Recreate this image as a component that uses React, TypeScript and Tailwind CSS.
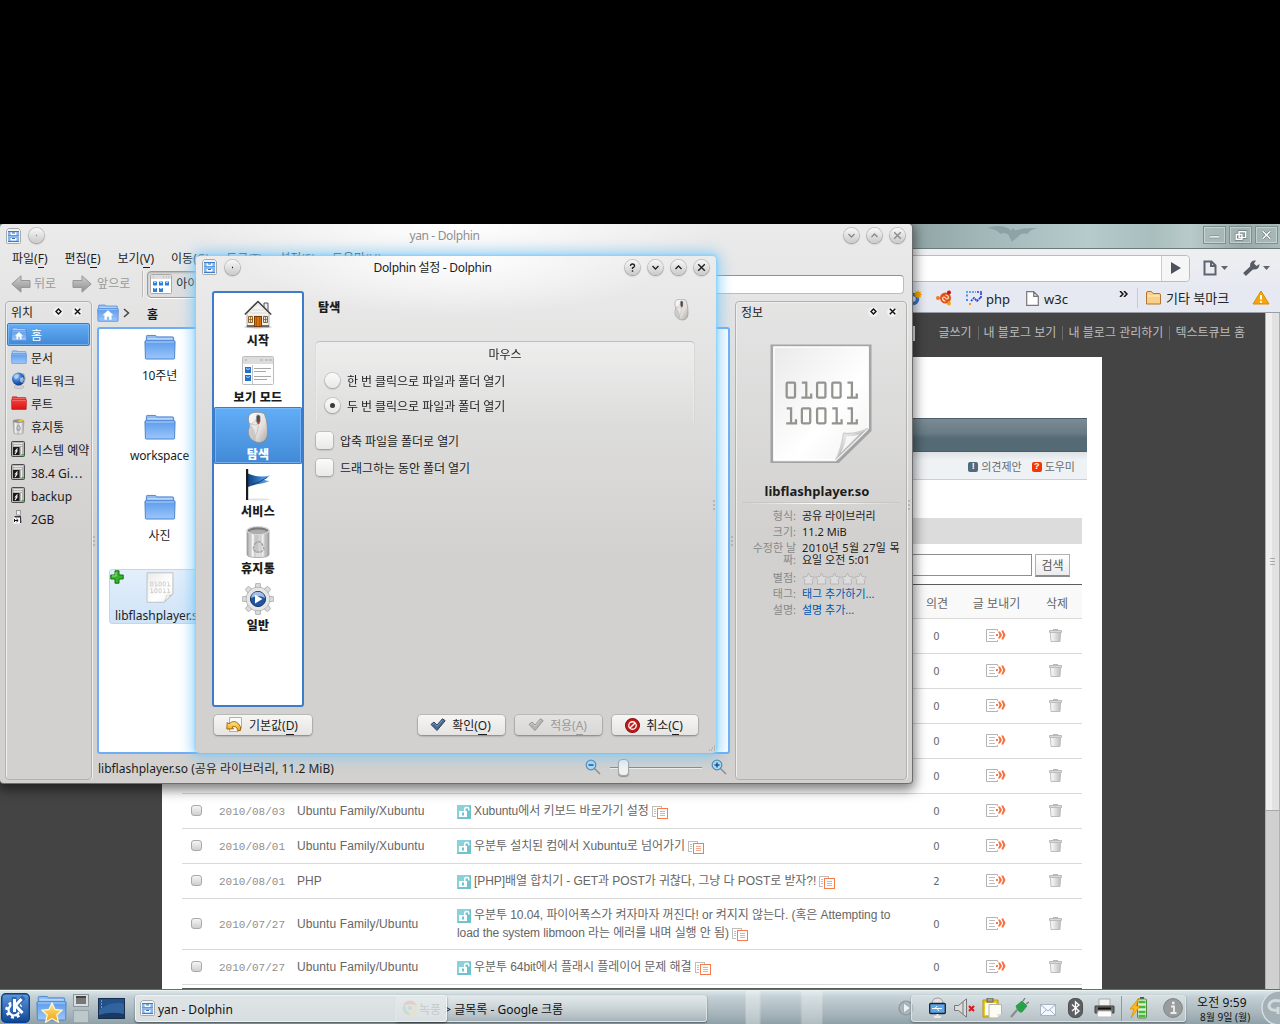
import React from "react";

type Kids = { children?: React.ReactNode };

/* ---------- small drawings ---------- */

function Gradients() {
  return (
    <svg className="absolute h-0 w-0" aria-hidden="true">
      <defs>
        <linearGradient id="folderBlue" x1="0" y1="0" x2="0" y2="1">
          <stop offset="0" stopColor="#5b9bea" />
          <stop offset="1" stopColor="#9cc6fa" />
        </linearGradient>
        <linearGradient id="folderRed" x1="0" y1="0" x2="0" y2="1">
          <stop offset="0" stopColor="#f5403c" />
          <stop offset="1" stopColor="#d81414" />
        </linearGradient>
        <linearGradient id="metal" x1="0" y1="0" x2="1" y2="0">
          <stop offset="0" stopColor="#9d9d9d" />
          <stop offset="0.25" stopColor="#f6f6f6" />
          <stop offset="0.45" stopColor="#c0c0c0" />
          <stop offset="0.7" stopColor="#efefef" />
          <stop offset="1" stopColor="#9a9a9a" />
        </linearGradient>
        <linearGradient id="mouseBody" x1="0" y1="0" x2="1" y2="1">
          <stop offset="0" stopColor="#ffffff" />
          <stop offset="0.6" stopColor="#e2dfdc" />
          <stop offset="1" stopColor="#a9a6a3" />
        </linearGradient>
        <linearGradient id="paper" x1="0" y1="0" x2="1" y2="1">
          <stop offset="0" stopColor="#e9eae9" />
          <stop offset="0.6" stopColor="#ffffff" />
          <stop offset="1" stopColor="#f1f1f1" />
        </linearGradient>
        <linearGradient id="curl" x1="0" y1="0" x2="1" y2="1">
          <stop offset="0" stopColor="#ffffff" />
          <stop offset="0.35" stopColor="#dcdcdc" />
          <stop offset="0.65" stopColor="#8e8e8e" />
        </linearGradient>
        <linearGradient id="arrowGray" x1="0" y1="0" x2="0" y2="1">
          <stop offset="0" stopColor="#d0d0d0" />
          <stop offset="1" stopColor="#8e8e8e" />
        </linearGradient>
        <linearGradient id="flagBlue" x1="0" y1="0" x2="1" y2="0">
          <stop offset="0" stopColor="#123f7c" />
          <stop offset="0.5" stopColor="#2f78c4" />
          <stop offset="1" stopColor="#79b4ea" />
        </linearGradient>
        <radialGradient id="globe" cx="0.35" cy="0.3" r="0.8">
          <stop offset="0" stopColor="#a9ccf5" />
          <stop offset="0.5" stopColor="#2e6cc4" />
          <stop offset="1" stopColor="#0d2e75" />
        </radialGradient>
        <linearGradient id="kblue" x1="0" y1="0" x2="0" y2="1">
          <stop offset="0" stopColor="#5f97d8" />
          <stop offset="1" stopColor="#0f4797" />
        </linearGradient>
        <linearGradient id="gold" x1="0" y1="0" x2="0" y2="1">
          <stop offset="0" stopColor="#ffe88a" />
          <stop offset="1" stopColor="#f0a10c" />
        </linearGradient>
        <linearGradient id="binGray" x1="0" y1="0" x2="1" y2="0">
          <stop offset="0" stopColor="#ffffff" />
          <stop offset="1" stopColor="#bdbdbd" />
        </linearGradient>
      </defs>
    </svg>
  );
}

function Cabinet() {
  return (
    <svg width="15" height="16" viewBox="0 0 15 16">
      <path d="M2.500.5h10l2 2v12a1 1 0 0 1-1 1h-12a1 1 0 0 1-1-1v-12z" fill="#f3f3f3" stroke="#a8a8a8" />
      <rect x="2" y="3" width="11" height="5" fill="#7fb6f2" />
      <rect x="2" y="9" width="11" height="5" fill="#7fb6f2" />
      <path d="M2 3.500h11M2 8h11M2 13.500h11" stroke="#3c7ccb" />
      <path d="M5 4.500v2h5v-2M5 10v2h5v-2" fill="#fff" stroke="#fff" />
      <path d="M6 5h3M6 10.500h3" stroke="#2e6cb9" />
    </svg>
  );
}

function Folder({ w = 32, h = 26, red = false, home = false }: { w?: number; h?: number; red?: boolean; home?: boolean }) {
  return (
    <svg width={w} height={h} viewBox="0 0 34 27" preserveAspectRatio="none">
      <path
        d="M2.500 9V2.500Q2.500 1.500 3.500 1.500H12Q13 1.500 13.500 3H30.500Q31.500 3 31.500 4V9z"
        fill={red ? "#e83a35" : "#8fbdf3"}
        stroke={red ? "#b00d0d" : "#4a84cf"}
      />
      <path d="M4 5h26" stroke={red ? "#ff9a96" : "#cfe4fc"} />
      <path
        d="M1 8Q1 7 2 7H32Q33 7 33 8L32.500 25Q32.500 26 31.500 26H2.500Q1.500 26 1.500 25z"
        fill={red ? "url(#folderRed)" : "url(#folderBlue)"}
        stroke={red ? "#b00d0d" : "#4a7fd0"}
      />
      <path d="M2 8.300h30" stroke={red ? "#ffb0ac" : "#bcd9fb"} />
      {home && <path d="M17 9.500l8.500 7.500h-3V23.500h-3.800v-4.500h-3.400v4.500H11.500v-6.500h-3z" fill="#fff" />}
    </svg>
  );
}

function Globe() {
  return (
    <svg width="16" height="17" viewBox="0 0 16 17">
      <ellipse cx="8" cy="15" rx="5" ry="1.500" fill="#d9d9d9" stroke="#a5a5a5" strokeWidth=".6" />
      <circle cx="7.500" cy="7" r="6.500" fill="url(#globe)" />
      <path d="M3 4q3-3 5-1l-1 3-3 1zM9 6l3-1 1 3-2 3-2-2z" fill="#b9d8f4" opacity=".75" />
      <path d="M12 1q4 5 0 11" fill="none" stroke="#a8a8a8" />
    </svg>
  );
}

function TrashSmall() {
  return (
    <svg width="16" height="17" viewBox="0 0 16 17">
      <path d="M2 3h11l-1 12.500q-4.500 1.500-9 0z" fill="url(#metal)" stroke="#9a9a9a" strokeWidth=".6" />
      <ellipse cx="7.500" cy="3" rx="5.500" ry="1.800" fill="#8d8d8d" />
      <path d="M6 3l5-2 2 2-4 1z" fill="#e8c63c" />
      <path d="M6 9l1.500-2L9 9v3H6z" fill="none" stroke="#888" strokeWidth=".8" />
    </svg>
  );
}

function Disk() {
  return (
    <svg width="15" height="16" viewBox="0 0 15 16">
      <rect x=".5" y=".5" width="13" height="15" rx="1" fill="#b4b4b4" stroke="#4a4a4a" />
      <path d="M2.500 2.500h9M3 4.500h8" stroke="#e6e6e6" />
      <rect x="2" y="6" width="6.500" height="8" fill="#1b1b1b" />
      <path d="M6.500 7.500L4.500 10h1.500L4 13" stroke="#fff" fill="none" strokeWidth="1.100" />
      <path d="M10.500 6v8" stroke="#eee" />
      <rect x="10.500" y="13" width="2.500" height="1.500" fill="#35b32c" />
    </svg>
  );
}

function Usb() {
  return (
    <svg width="15" height="16" viewBox="0 0 15 16">
      <rect x="5.500" y=".5" width="4" height="4.500" fill="#efefef" stroke="#9a9a9a" />
      <path d="M3 5.500l7.500-.5.5 8.500H3z" fill="#3a3640" stroke="#d7d7de" />
      <rect x="2.500" y="7.500" width="6.500" height="6" fill="#fff" />
      <path d="M3.500 10.500h3.500M5.500 9l1.700 1.500L5.500 12M3.500 9v3" stroke="#111" fill="none" />
    </svg>
  );
}

function NavArrow({ flip = false }: { flip?: boolean }) {
  return (
    <svg width="20" height="18" viewBox="0 0 20 18" className={flip ? "-scale-x-100" : ""}>
      <path d="M.8 9L10 .8v4.700h9v7h-9v4.700z" fill="url(#arrowGray)" stroke="#979797" strokeLinejoin="round" />
    </svg>
  );
}

function IconView() {
  return (
    <svg width="22" height="20" viewBox="0 0 22 20">
      <rect x=".5" y=".5" width="21" height="19" rx="1" fill="#fff" stroke="#a9a9a9" />
      <rect x="1" y="1" width="20" height="4" fill="#dedede" />
      <path d="M3 3h1M13 3h1M16 3h1M18 3h1" stroke="#aaa" />
      <path d="M3 7.500h4v4H3zM9 7.500h4v4H9zM15 7.500h4v4h-4zM3 14h4v4H3zM9 14h4v4H9z" fill="#2f7fd6" />
      <path d="M4 8.500h2M10 8.500h2M16 8.500h2M4 14.500h2M10 14.500h2" stroke="#a9d4ff" />
    </svg>
  );
}

function House() {
  return (
    <svg width="32" height="32" viewBox="0 0 32 32">
      <ellipse cx="16" cy="29" rx="14" ry="1.500" fill="#ccc" />
      <path d="M22 5h4v8h-4z" fill="#eee" stroke="#555" />
      <path d="M5 15L16 4l11 11v14H5z" fill="#f4f4f2" stroke="#999" strokeWidth=".8" />
      <path d="M7 18h18M7 21h18M8 15h16M10 12h12" stroke="#d2d2d0" strokeWidth=".8" />
      <path d="M2.800 16.500L16 3.500 29.200 16.500" fill="none" stroke="#444" strokeWidth="1.600" />
      <path d="M4.500 17L16 5.700 27.500 17" fill="none" stroke="#ddd" strokeWidth=".8" />
      <path d="M5 28h22" stroke="#444" strokeWidth="1.500" />
      <rect x="12.500" y="18.500" width="7" height="10" fill="#d9730d" stroke="#7a3d0a" />
      <path d="M14.500 19v9M17.500 19v9" stroke="#b45808" />
      <path d="M6.500 18.500h4v6h-4zM21.500 18.500h4v6h-4z" fill="#dbe7ee" stroke="#8d6224" />
      <path d="M8.500 18.500v6M6.500 21.500h4M23.500 18.500v6M21.500 21.500h4" stroke="#8d6224" strokeWidth=".8" />
    </svg>
  );
}

function ViewModes() {
  return (
    <svg width="32" height="32" viewBox="0 0 32 32">
      <rect x=".5" y="1.500" width="31" height="28" rx="1" fill="#fdfdfd" stroke="#bdbdbd" />
      <rect x="1" y="2" width="30" height="7" fill="#dcdcdc" />
      <path d="M3 5h2M18 5h3M23 5h3M27 5h3" stroke="#aaa" />
      <path d="M10.500 10v19" stroke="#c4c4c4" />
      <path d="M12 13.500h17M12 16.500h12M12 21.500h17M12 24.500h13" stroke="#a8a8a8" />
      <rect x="3" y="12" width="6" height="6" fill="#256fc8" />
      <rect x="3" y="20" width="6" height="6" fill="#256fc8" />
      <path d="M4 13.500q2 2 4 0M4 21.500q2 2 4 0" stroke="#b9dcff" fill="none" />
    </svg>
  );
}

function Mouse({ w = 32, h = 32 }: { w?: number; h?: number }) {
  return (
    <svg width={w} height={h} viewBox="0 0 32 32">
      <path
        d="M9 1.500C12-.2 20-.2 22.500 2 25 8 25.500 15 25.500 21c0 6-3.500 9.500-8 9.500S7 27 6.500 21C6 18 8 16 7.500 12 5.800 8 6 3.500 9 1.500z"
        fill="url(#mouseBody)"
        stroke="#8d8a87"
        strokeWidth=".8"
      />
      <path d="M7.500 12q6 3 6.500 17-6-1-7-8 1-5 .5-9z" fill="#b5b2af" opacity=".55" />
      <path d="M7.500 12q7 0 8-10M7.500 12q6 2 9 0 0 8-5 16" fill="none" stroke="#c2bfbc" strokeWidth=".8" />
      <rect x="14.500" y="3" width="3.600" height="8" rx="1.800" fill="#4c4c4c" stroke="#8f8f8f" strokeWidth=".6" />
      <rect x="15.400" y="9.500" width="2" height="2.500" fill="#d8342c" />
    </svg>
  );
}

function Flag() {
  return (
    <svg width="32" height="32" viewBox="0 0 32 32">
      <ellipse cx="16" cy="30.500" rx="12" ry="1" fill="#e2e2e2" />
      <path d="M6 4.500q9 4.500 22 2-3 3-6 4 3 1.500 6 1.500-7 3-14 3.500-5 1-8 2.500z" fill="url(#flagBlue)" />
      <path d="M10 15.500q8-2 15-7" stroke="#0e3568" strokeWidth=".8" fill="none" />
      <rect x="4" y="0" width="2.200" height="31" fill="#1a1a1a" />
    </svg>
  );
}

function TrashBig() {
  return (
    <svg width="32" height="33" viewBox="0 0 32 33">
      <path d="M5 4v24.500q0 3 11 3t11-3V4z" fill="url(#metal)" stroke="#9e9e9e" strokeWidth=".8" />
      <path d="M9 8v22M13 9v22M19 9v22M23 8v22" stroke="#ababab" strokeWidth=".8" opacity=".7" />
      <ellipse cx="16" cy="4.500" rx="11" ry="3.800" fill="#7b7b7b" stroke="#d8d8d8" strokeWidth="1.200" />
      <ellipse cx="16" cy="5.800" rx="9" ry="2.200" fill="#acacac" />
      <path d="M13 18q3.500-5 7 0l2 5-3 3h-5l-3-3z" fill="none" stroke="#a5a5a5" strokeWidth="1.600" strokeDasharray="3 1" />
      <path d="M13.500 27h6v4h-6z" fill="#dedede" />
    </svg>
  );
}

function Gear() {
  return (
    <svg width="32" height="32" viewBox="0 0 32 32">
      <g fill="#dcdcdc" stroke="#adadad" strokeWidth=".9">
        {[0, 45, 90, 135, 180, 225, 270, 315].map((a) => (
          <path key={a} d="M13 7l.8-6.500q2.200-.8 4.400 0L19 7z" transform={`rotate(${a} 16 16)`} />
        ))}
        <circle cx="16" cy="16" r="11.800" />
      </g>
      <circle cx="16" cy="16" r="11.300" fill="#e6e6e6" />
      <circle cx="16" cy="16" r="8.300" fill="#f7f7f7" />
      <circle cx="16" cy="16" r="7.600" fill="#22559f" stroke="#15356b" />
      <path d="M9 15q7-4 14 0-1-6-7-6.300Q10 9 9 15z" fill="#a8bfdd" />
      <path d="M13 11.500l7.500 4.500-7.500 4.500z" fill="#fff" />
    </svg>
  );
}

function Check({ gray = false }: { gray?: boolean }) {
  return (
    <svg width="16" height="14" viewBox="0 0 16 14">
      <path
        d="M1 6.500l3-2.500 3 3L12.500.8l2.700 1.900-8.200 9.800z"
        fill={gray ? "#b3b3b3" : "#4a6a90"}
        stroke={gray ? "#979797" : "#2b4364"}
        strokeLinejoin="round"
      />
      <path d="M2.500 6.500L4 5.200l3 3L12.500 2.300" fill="none" stroke={gray ? "#d0d0d0" : "#89a5c6"} strokeWidth=".8" />
    </svg>
  );
}

function Cancel() {
  return (
    <svg width="15" height="15" viewBox="0 0 14 14">
      <circle cx="7" cy="7" r="6.500" fill="#c8191a" stroke="#8a1010" />
      <circle cx="7" cy="7" r="3.500" fill="none" stroke="#fff" strokeWidth="1.200" />
      <path d="M4.600 9.400l4.800-4.800" stroke="#fff" strokeWidth="1.300" />
    </svg>
  );
}

function Undo() {
  return (
    <svg width="17" height="16" viewBox="0 0 17 16">
      <path d="M3.500.5h12v11l-3 3h-9z" fill="#fafafa" stroke="#b0b0b0" />
      <path d="M.8 12l.4-6.500 1.800 1.300q5-4.500 9.500 0Q15.500 9.500 14.500 13.500h-3q.2-3-2.300-3.800-1.700-.4-3 .2l1.300 2z" fill="url(#gold)" stroke="#9a6208" strokeWidth=".9" />
    </svg>
  );
}

function BinaryDoc({ w, h, faint = false }: { w: number; h: number; faint?: boolean }) {
  return (
    <svg width={w} height={h} viewBox="0 0 104 120" preserveAspectRatio="none">
      {!faint && <path d="M2 2h100v85l-34 33H2z" fill="none" stroke="#777" strokeWidth="3" opacity=".55" />}
      <path d="M4 3h96v82L67 117H4z" fill="url(#paper)" stroke={faint ? "#b5b5b5" : "#ffffff"} strokeWidth={faint ? 3 : 1.500} />
      <g fill="none" stroke="#94948f" strokeWidth="2.300" opacity={faint ? 0.6 : 1}>
        {["01001", "10011"].map((row, r) =>
          row.split("").map((b, i) => {
            const x = 17 + i * 15.500;
            const y = 39 + r * 26;
            return b === "0" ? (
              <rect key={`${r}${i}`} x={x} y={y} width="8.500" height="15" rx="1" />
            ) : (
              <path key={`${r}${i}`} d={`M${x} ${y}h4.500v15M${x - 0.5} ${y + 15}h10v-4`} />
            );
          })
        )}
      </g>
      <path d="M67 117Q73 104 76 90q14 2 24-5z" fill="url(#curl)" />
      <path d="M72 110q5-9 6-17 7 .5 13-2z" fill="#fafafa" opacity=".9" />
      <path d="M67 117q6-12 8-27 13 1 25-5" fill="none" stroke="#cfcfcf" strokeWidth="1.500" />
    </svg>
  );
}

function Magnifier({ plus = false }: { plus?: boolean }) {
  return (
    <svg width="16" height="16" viewBox="0 0 16 16">
      <path d="M9 9l6 6" stroke="#8b8b8b" strokeWidth="1.400" />
      <circle cx="6" cy="6" r="4.800" fill="#a7dcf6" stroke="#5c86ab" strokeWidth="1.200" />
      <path d={plus ? "M3.500 6h5M6 3.500v5" : "M3.500 6h5"} stroke="#174d94" strokeWidth="1.500" />
    </svg>
  );
}

function SendIcon() {
  return (
    <svg width="20" height="13" viewBox="0 0 20 13">
      <path d="M11.500 2V.5H.5v12h11V11" fill="none" stroke="#b3b3b3" />
      <path d="M3 3.500h6M3 6.500h5M3 9.500h6" stroke="#bdbdbd" />
      <path d="M10 5h2v2h-2z" fill="#f77b4d" />
      <path d="M12 2.500h2l2 3.500-2 3.500h-2l1.500-3.500zM15.300 1.500h2l2.200 4.500-2.200 4.500h-2l1.800-4.500z" fill="#f77040" />
    </svg>
  );
}

function BinIcon() {
  return (
    <svg width="13" height="13" viewBox="0 0 13 13">
      <path d="M4 .5h5M.5 1.500h12v2H.5z" fill="#d9d9d9" stroke="#b9b9b9" />
      <path d="M1.500 3.500h10l-.5 9H2z" fill="url(#binGray)" stroke="#bcbcbc" />
    </svg>
  );
}

function LockIcon() {
  return (
    <svg width="14" height="14" viewBox="0 0 14 14" className="mr-[3px] inline-block align-[-4px]">
      <rect width="14" height="14" fill="#6fc3cd" />
      <path d="M0 14V0h14z" fill="#8bd2d8" />
      <path d="M2 6h8v6H2z" fill="#fff" />
      <path d="M7.700 6V4q0-1.500 1.600-1.500h1q1.500 0 1.500 1.500v1.500" fill="none" stroke="#fff" strokeWidth="1.500" />
      <rect x="5" y="7.500" width="2" height="3" fill="#6fc3cd" />
    </svg>
  );
}

function CopyIcon() {
  return (
    <svg width="16" height="13" viewBox="0 0 16 13" shapeRendering="crispEdges" className="ml-[3px] inline-block align-[-4px]">
      <path d="M4 10.500H.5V.5h9v1M2 3.500h2M2 5.500h2M2 7.500h2" fill="none" stroke="#bdbdbd" />
      <rect x="5.500" y="2.500" width="10" height="10" fill="#fff" stroke="#f77b4d" />
      <path d="M8 5.500h5M8 7.500h5M8 9.500h5" stroke="#f9a98b" />
    </svg>
  );
}

/* ---------- shared pieces ---------- */

function RoundButton({ children, dim = false }: Kids & { dim?: boolean }) {
  return (
    <span
      className={`flex h-[15px] w-[15px] items-center justify-center rounded-full bg-gradient-to-b from-[#f8f8f8] to-[#cbcac9] shadow-[0_0_0_1px_rgba(130,130,130,.35),0_1px_2px_rgba(0,0,0,.3)] ${
        dim ? "text-[#8b8b8b]" : "text-[#222]"
      }`}
    >
      {children}
    </span>
  );
}

function Glyph({ d }: { d: string }) {
  return (
    <svg width="9" height="9" viewBox="0 0 9 9">
      <path d={d} fill="none" stroke="currentColor" strokeWidth="1.400" />
    </svg>
  );
}
const DOWN = "M1.500 3L4.500 6l3-3";
const UP = "M1.500 6L4.500 3l3 3";
const CROSS = "M1.200 1.200l6.600 6.600M7.800 1.200L1.200 7.800";
const HELP = "M2.500 3Q2.500 1 4.500 1T6.500 3Q6.500 4 4.500 5v1M4.500 7.300v1.400";

function DockHeader({ title }: { title: string }) {
  return (
    <div className="flex h-[19px] items-center pl-[5px] pr-[9px]">
      <span className="flex-1 pt-[2px] text-[12px]">{title}</span>
      <span className="flex h-[10px] w-[10px] items-center justify-center rounded-full bg-[#f2f2f2] text-[#111]">
        <Glyph d="M4.500 2L7 4.500 4.500 7 2 4.500z" />
      </span>
      <span className="ml-[9px] flex h-[10px] w-[10px] items-center justify-center rounded-full bg-[#f2f2f2] text-[#111]">
        <Glyph d="M1.800 1.800l5.500 5.500M7.300 1.800L1.800 7.300" />
      </span>
    </div>
  );
}

function Key({ k }: { k: string }) {
  return (
    <>
      (<span className="border-b border-current">{k}</span>)
    </>
  );
}

/* ---------- browser ---------- */

const posts = [
  { date: "", cat: "", title: "", n: 0, tall: false },
  { date: "", cat: "", title: "", n: 0, tall: false },
  { date: "", cat: "", title: "", n: 0, tall: false },
  { date: "", cat: "", title: "", n: 0, tall: false },
  { date: "", cat: "", title: "", n: 0, tall: false },
  { date: "2010/08/03", cat: "Ubuntu Family/Xubuntu", title: "Xubuntu에서 키보드 바로가기 설정", n: 0, tall: false },
  { date: "2010/08/01", cat: "Ubuntu Family/Xubuntu", title: "우분투 설치된 컴에서 Xubuntu로 넘어가기", n: 0, tall: false },
  { date: "2010/08/01", cat: "PHP", title: "[PHP]배열 합치기 - GET과 POST가 귀찮다, 그냥 다 POST로 받자?!", n: 2, tall: false },
  {
    date: "2010/07/27",
    cat: "Ubuntu Family/Ubuntu",
    title: "우분투 10.04, 파이어폭스가 켜자마자 꺼진다! or 켜지지 않는다. (혹은 Attempting to load the system libmoon 라는 에러를 내며 실행 안 됨)",
    n: 0,
    tall: true,
  },
  { date: "2010/07/27", cat: "Ubuntu Family/Ubuntu", title: "우분투 64bit에서 플래시 플레이어 문제 해결", n: 0, tall: false },
];

const COLS = "grid grid-cols-[29px_81px_160px_459px_51px_67px_52px] items-center";

function Browser() {
  return (
    <div className="absolute left-0 top-[224px] flex h-[766px] w-[1280px] flex-col bg-[#444]">
      <div className="flex h-[25px] items-start justify-end gap-[3px] border-b border-[#6b7b7c] bg-[linear-gradient(90deg,#8fa3a4_0,#8fa3a4_71%,#9fb5b6_76%,#b5cbcc_85%,#a9bebe_90%,#b9caca_93%,#98a9aa_97%,#a9bbbb)] pr-[2px] pt-[2px] text-white">
        <svg width="52" height="18" viewBox="0 0 46 16" className="mr-[161px]">
          <path d="M0 2q9-4 19 0l2 2 2-2 2 2q8-3 20-2-7 1-9 5-6-1-8 2l-6 5-3-6q-3-3-7-1-5-5-12-5z" fill="#7c9294" opacity=".6" />
        </svg>
        {["M6 10h10", "M9.500 4.500h7v6h-7zM6.500 7.500h6v5h-6z", "M7 4l8 8M15 4l-8 8"].map((d) => (
          <span key={d} className="flex h-[18px] w-[23px] items-center justify-center border border-[#7f8f8f] bg-[#a6b7b6]/60 shadow-[inset_0_0_0_1px_rgba(255,255,255,.35)]">
            <svg width="22" height="16" viewBox="0 0 22 16">
              <path d={d} fill="none" stroke="#6d7d7d" strokeWidth="2.800" />
              <path d={d} fill="none" stroke="#fff" strokeWidth="1.500" />
            </svg>
          </span>
        ))}
      </div>
      <div className="flex h-[37px] items-center bg-gradient-to-b from-[#eeefef] to-[#e7eaf2] pr-[10px] pt-px">
        <div className="ml-[40px] flex h-[27px] flex-1 items-stretch rounded border border-[#b9bcc2] bg-white">
          <div className="flex-1" />
          <div className="flex w-[28px] items-center justify-center rounded-r border-l border-[#ccc] bg-[#f6f6f7]">
            <svg width="10" height="12" viewBox="0 0 10 12"><path d="M0 0l10 6-10 6z" fill="#4d525c" /></svg>
          </div>
        </div>
        <svg width="14" height="16" viewBox="0 0 14 16" className="ml-[13px]">
          <path d="M1.500 1.500h7l4 4v9h-11zM8 1.500V6h4.500" fill="none" stroke="#5f656f" strokeWidth="2" />
        </svg>
        <svg width="7" height="4" viewBox="0 0 7 4" className="ml-[4px]"><path d="M0 0h7L3.500 4z" fill="#5f656f" /></svg>
        <svg width="17" height="16" viewBox="0 0 17 16" className="ml-[15px]">
          <path d="M1.500 14.500L9 7.500" stroke="#565c66" strokeWidth="4" />
          <path d="M7 6Q7 0 13 .5L11 3.500l2.500 2.500L16.500 4Q16.500 10 10 9.500z" fill="#565c66" />
        </svg>
        <svg width="7" height="4" viewBox="0 0 7 4" className="ml-[3px]"><path d="M0 0h7L3.500 4z" fill="#5f656f" /></svg>
      </div>
      <div className="flex h-[27px] items-center border-b border-[#9a9da5] bg-[#e6e9f2] pb-[2px] pl-[906px] text-[13px] leading-[18px] text-[#222]">
        <svg width="16" height="16" viewBox="0 0 16 16">
          <circle cx="7" cy="9" r="4.500" fill="none" stroke="#3773d8" strokeWidth="3.500" />
          <path d="M12 0l1 2 2-.5L14.500 3.500l1.500 1-1.500 1 .5 2-2-.5-1 2-1-2-2 .5.500-2-1.500-1 1.500-1L9 1.500l2 .5z" fill="#f5a800" />
        </svg>
        <svg width="17" height="16" viewBox="0 0 17 16" className="ml-[14px]">
          <circle cx="9.500" cy="8" r="5.500" fill="#e2511a" />
          <path d="M9.500 5q3 0 3 3M9.500 11q-3 0-3-3 1.500-2 3 0 1.500 2 3 0" fill="none" stroke="#ffe0bd" strokeWidth="1.200" />
          <circle cx="2" cy="8" r="2" fill="#f07a1a" />
          <circle cx="13" cy="2.500" r="2" fill="#c91212" />
          <circle cx="13" cy="13.500" r="2" fill="#f2a20d" />
        </svg>
        <svg width="17" height="16" viewBox="0 0 17 16" className="ml-[13px]">
          <path d="M0 2h10" stroke="#3594f0" strokeWidth="1.600" strokeDasharray="2 1" />
          <path d="M11 2h5M15 3v5" stroke="#2a3fd0" strokeWidth="1.600" strokeDasharray="2 1" />
          <path d="M0 5.500h2M0 10h2" stroke="#3594f0" strokeWidth="2" />
          <path d="M5 11l3-3 3 3 4-4" fill="none" stroke="#2a3fd0" strokeWidth="1.700" strokeDasharray="2 .8" />
          <path d="M3 14h2" stroke="#f09a1a" strokeWidth="2" />
        </svg>
        <span className="ml-[3px] w-[40px] pt-[2px]">php</span>
        <svg width="13" height="15" viewBox="0 0 13 15">
          <path d="M.7.700h7l4.600 4.600v9H.7zM7.700.7v4.600h4.600" fill="#fff" stroke="#777" strokeWidth="1.200" />
        </svg>
        <span className="ml-[5px] w-[75px] pt-[2px]">w3c</span>
        <svg width="9" height="6" viewBox="0 0 9 6" className="-mt-[9px]"><path d="M1 0l3 3-3 3M5 0l3 3-3 3" fill="none" stroke="#111" strokeWidth="1.500" /></svg>
        <span className="ml-[9px] h-[20px] w-px bg-[#c2c9e0]" />
        <svg width="15" height="14" viewBox="0 0 15 14" className="ml-[8px]">
          <path d="M.5 13V2q0-1.500 1.500-1.500h3.500L7 2.500h6q1.500 0 1.500 1V13z" fill="#f9cf8a" stroke="#b4752c" />
          <path d="M1.500 5h12" stroke="#fff0d2" />
        </svg>
        <span className="ml-[5px] w-[86px]">기타 북마크</span>
        <svg width="18" height="15" viewBox="0 0 18 15" className="-mt-[2px]">
          <path d="M9 1l8 13H1z" fill="#f5a60c" stroke="#d98a04" strokeLinejoin="round" />
          <path d="M9 5v4.500M9 11v1.800" stroke="#fff" strokeWidth="2" />
        </svg>
      </div>
      <div className="flex min-h-0 flex-1">
        <div className="flex-1 overflow-hidden font-['Liberation_Sans','Noto_Sans_CJK_KR',sans-serif] text-[12px]">
          <div className="flex h-[44px] items-start justify-end pr-[20px] pt-[10px] leading-[20px] text-[#bdbdbd]">
            <span className="mr-[23px] mt-[3px] h-[15px] w-[120px] bg-[#e6e6e6]" />
            {["글쓰기", "내 블로그 보기", "내 블로그 관리하기", "텍스트큐브 홈"].map((t, i) => (
              <span key={t} className={i ? "ml-[6px] flex items-center before:mr-[5px] before:h-[14px] before:w-px before:bg-[#6a6a6a]" : ""}>{t}</span>
            ))}
          </div>
          <div className="ml-[162px] h-[640px] w-[940px] bg-white pt-[61px]">
            <div className="ml-[15px] h-[34px] w-[910px] border-y border-[#4a5f69] bg-[linear-gradient(#7b8b93,#687b84_45%,#546a75_60%,#546a75)]" />
            <div className="ml-[15px] flex h-[28px] w-[910px] items-center justify-end border-b border-[#ccd0d2] bg-[linear-gradient(#dde1e4,#eef2f5_30%)] pr-[12px] pt-[2px] text-[11px] text-[#6a6a6a]">
              <span className="flex h-[10px] w-[10px] items-center justify-center rounded-[2px] bg-[#546a75] text-[9px] font-bold leading-[9px] text-white">!</span>
              <span className="ml-[3px]">의견제안</span>
              <span className="ml-[10px] flex h-[10px] w-[10px] items-center justify-center rounded-[2px] bg-[#f63600] text-[9px] font-bold leading-[9px] text-white">?</span>
              <span className="ml-[3px]">도우미</span>
            </div>
            <div className="ml-[20px] mt-[38px] h-[26px] w-[900px] bg-[#dcdcdc]" />
            <div className="ml-[20px] mt-[10px] flex h-[23px] w-[888px] justify-end gap-[3px]">
              <div className="h-[22px] w-[300px] border border-[#8f8f8f] bg-white" />
              <div className="h-[23px] w-[35px] border border-b-2 border-[#b0b0b0] border-b-[#8c8c8c] bg-gradient-to-b from-white to-[#ececec] text-center text-[12px] leading-[22px] text-[#555]">검색</div>
            </div>
            <div className="ml-[20px] mt-[7px] w-[900px] text-[#666]">
              <div className={`${COLS} h-[35px] border-b border-t border-b-[#d9d9d9] border-t-[#5c5c5c] bg-[#f9f9f9] pt-[4px]`}>
                <span /><span /><span /><span />
                <span className="pl-px text-center">의견</span>
                <span className="pl-[2px] text-center">글 보내기</span>
                <span className="pl-[4px] text-center">삭제</span>
              </div>
              {posts.map((p, i) => (
                <div key={i} className={`${COLS} border-b border-[#d9d9d9] ${p.tall ? "h-[51px]" : "h-[35px]"}`}>
                  <span className="mx-auto mb-[2px] h-[11px] w-[11px] rounded-[3px] border border-[#a9a9a9] bg-gradient-to-b from-[#f5f5f5] to-[#cfcfcf]" />
                  <span className="pl-px pt-px text-center font-['Liberation_Mono',monospace] text-[11px] text-[#8f8f8f]">{p.date}</span>
                  <span className="pl-[5px] tracking-[0.100px]">{p.cat}</span>
                  <span className="break-keep pl-[5px] pr-[15px] leading-[18px] tracking-[-0.070px]">
                    {p.title && (
                      <>
                        <LockIcon />
                        {p.title}
                        <CopyIcon />
                      </>
                    )}
                  </span>
                  <span className="pt-[2px] text-center font-['DejaVu_Sans',sans-serif] text-[10px]">{p.n}</span>
                  <span className="flex justify-center pb-[2px]"><SendIcon /></span>
                  <span className="flex justify-center pb-[2px]"><BinIcon /></span>
                </div>
              ))}
              <div className="mt-[3px] h-px bg-[#5c5c5c]" />
            </div>
          </div>
        </div>
        <div className="flex w-[15px] flex-col border-x border-[#b0b0b0] bg-[#d0d0d0]">
          <div className="flex h-[498px] flex-col items-center justify-center gap-[2px] border-b border-[#a8a8a8] bg-[linear-gradient(90deg,#efefef_50%,#e2e2e2_50%)]">
            <span className="h-px w-[5px] bg-[#aaa]" />
            <span className="h-px w-[5px] bg-[#aaa]" />
            <span className="h-px w-[5px] bg-[#aaa]" />
          </div>
        </div>
      </div>
    </div>
  );
}

/* ---------- file manager ---------- */

const places: { name: string; icon: React.ReactNode }[] = [
  { name: "홈", icon: <Folder w={16} h={14} home /> },
  { name: "문서", icon: <Folder w={16} h={14} /> },
  { name: "네트워크", icon: <Globe /> },
  { name: "루트", icon: <Folder w={16} h={14} red /> },
  { name: "휴지통", icon: <TrashSmall /> },
  { name: "시스템 예약", icon: <Disk /> },
  { name: "38.4 Gi⋯", icon: <Disk /> },
  { name: "backup", icon: <Disk /> },
  { name: "2GB", icon: <Usb /> },
];

function InfoRow({ label, children, cls = "h-[16px]" }: Kids & { label: string; cls?: string }) {
  return (
    <div className={`flex leading-[12px] ${cls}`}>
      <span className="w-[52px] shrink-0 break-keep text-right text-[#888]">{label}</span>
      <span className="ml-[6px] flex-1 whitespace-nowrap">{children}</span>
    </div>
  );
}

function Dots() {
  return (
    <span className="flex w-[3px] flex-col gap-[2px]">
      <i className="h-[2px] w-[2px] bg-[#b4b4b4]" />
      <i className="h-[2px] w-[2px] bg-[#b4b4b4]" />
      <i className="h-[2px] w-[2px] bg-[#b4b4b4]" />
    </span>
  );
}

function Dolphin() {
  return (
    <div className="absolute left-0 top-[224px] flex h-[560px] w-[912px] flex-col rounded-[4px] border-b border-[#6e6e6e] bg-[radial-gradient(ellipse_260px_60px_at_50%_0,#ffffff,transparent),linear-gradient(#ebebeb,#d2d1d0_55%,#d2d1cf)] shadow-[1px_0_0_#6e6e6e,0_3px_12px_3px_rgba(0,0,0,.5)]">
      <div className="flex h-[23px] items-center pl-[6px] pr-[7px]">
        <Cabinet />
        <span className="ml-[8px]"><RoundButton dim><Glyph d="M4 4.500h1" /></RoundButton></span>
        <span className="ml-[-37px] flex-1 pl-[38px] text-center tracking-[-0.350px] text-[#8f8f8f]">yan - Dolphin</span>
        <span className="flex gap-[8px]">
          <RoundButton dim><Glyph d={DOWN} /></RoundButton>
          <RoundButton dim><Glyph d={UP} /></RoundButton>
          <RoundButton dim><Glyph d={CROSS} /></RoundButton>
        </span>
      </div>
      <div className="flex h-[22px] items-center gap-[17px] pl-[12px]">
        {[["파일", "F"], ["편집", "E"], ["보기", "V"], ["이동", "G"], ["도구", "T"], ["설정", "S"], ["도움말", "H"]].map(([n, k]) => (
          <span key={n} className="pt-px leading-[14px]">{n}<Key k={k} /></span>
        ))}
      </div>
      <div className="flex h-[30px] items-center pl-[11px] pr-[8px] text-[#999]">
        <NavArrow />
        <span className="ml-[3px]">뒤로</span>
        <span className="ml-[16px] flex"><NavArrow flip /></span>
        <span className="ml-[5px]">앞으로</span>
        <span className="ml-[12px] h-[26px] w-px bg-[#bbb] shadow-[1px_0_0_#f2f2f2]" />
        <div className="ml-[4px] flex h-[27px] w-[70px] items-center rounded border border-[#9b9b9b] bg-[#dedede] pl-[2px] text-[#222] shadow-[0_1px_0_#fff,inset_0_1px_2px_rgba(0,0,0,.2)]">
          <IconView />
          <span className="ml-[4px]">아이콘</span>
        </div>
        <div className="ml-auto h-[19px] w-[260px] rounded-[4px] border border-[#bdbcbb] border-t-[#909090] bg-white" />
      </div>
      <div className="flex h-[481px] pt-[2px]">
        <div className="ml-[5px] h-[479px] w-[87px] rounded border border-[#b2b1b0] shadow-[inset_1px_1px_0_#efefef,1px_0_0_#efefef]">
          <DockHeader title="위치" />
          <div className="h-[2px]" />
          {places.map((p, i) => (
            <div
              key={p.name}
              className={`flex h-[23px] items-center whitespace-nowrap ${
                i === 0 ? "ml-px mr-[1px] rounded-[2px] border border-[#3a7cc4] bg-gradient-to-b from-[#62aef8] to-[#4289d4] pl-[3px] text-white shadow-[inset_0_0_0_1px_rgba(140,195,250,.6)]" : "pl-[5px]"
              }`}
            >
              <span className="-mt-px flex w-[17px]">{p.icon}</span>
              <span className="ml-[3px] pt-[2px]">{p.name}</span>
            </div>
          ))}
        </div>
        <div className="flex w-[5px] items-center pl-[1px]"><Dots /></div>
        <div className="flex w-[633px] flex-col">
          <div className="flex h-[26px] items-center pb-[2px]">
            <Folder w={22} h={18} home />
            <svg width="7" height="10" viewBox="0 0 7 10" className="ml-[4px]"><path d="M1 1l4.500 4L1 9" fill="none" stroke="#444" strokeWidth="1.500" /></svg>
            <b className="ml-[17px] pt-[4px]">홈</b>
          </div>
          <div className="h-[428px] rounded-[3px] border-2 border-[#6eaef5] bg-white">
            {["10주년", "workspace", "사진"].map((n) => (
              <div key={n} className="flex h-[80px] w-[121px] flex-col items-center pt-[5px]">
                <Folder />
                <span className="mt-[8px] leading-[16px] tracking-[-0.150px]">{n}</span>
              </div>
            ))}
            <div className="relative ml-[10px] h-[55px] w-[101px] rounded-[3px] border border-[#bcd9f3] bg-gradient-to-b from-[#e3effb] to-[#cfe3f7]">
              <svg width="14" height="14" viewBox="0 0 14 14" className="absolute left-0 top-0">
                <path d="M5 .8h4V5h4.200v4H9v4.200H5V9H.8V5H5z" fill="#35b52b" stroke="#14700f" />
                <path d="M6 2v4H2" fill="none" stroke="#9be48f" />
              </svg>
              <div className="flex w-[99px] justify-center pt-[2px]"><BinaryDoc w={28} h={31} faint /></div>
              <div className="ml-[5px] mt-[5px] whitespace-nowrap leading-[16px]">libflashplayer.so</div>
            </div>
          </div>
          <div className="flex h-[26px] items-center pl-[1px]">
            <span className="flex-1 pt-[4px]">libflashplayer.so (공유 라이브러리, 11.2 MiB)</span>
            <Magnifier />
            <div className="relative ml-[9px] mr-[9px] h-px w-[92px] bg-[#8b8b8b] shadow-[0_1px_0_#ededed]">
              <span className="absolute left-[8px] top-[-8px] h-[17px] w-[11px] rounded-[4px] border border-[#a5a5a5] bg-[#f0f1f2] shadow-[0_1px_1px_rgba(0,0,0,.3)]" />
            </div>
            <Magnifier plus />
            <span className="w-[3px]" />
          </div>
        </div>
        <div className="flex w-[5px] items-center pl-[1px]"><Dots /></div>
        <div className="flex h-[479px] w-[172px] shrink-0 flex-col rounded border border-[#b2b1b0] shadow-[inset_1px_1px_0_#efefef,1px_0_0_#efefef]">
          <DockHeader title="정보" />
          <div className="flex justify-center pt-[23px]"><BinaryDoc w={102} h={119} /></div>
          <div className="mt-[20px] pr-[8px] text-center text-[13px] font-bold leading-[16px]">libflashplayer.so</div>
          <div className="mx-[6px] mt-[4px] h-px bg-[linear-gradient(90deg,transparent,#fff_50%,transparent)] shadow-[0_-1px_0_rgba(0,0,0,.06)]" />
          <div className="mt-[6px] pl-[8px] text-[11px]">
            <InfoRow label="형식:">공유 라이브러리</InfoRow>
            <InfoRow label="크기:">11.2 MiB</InfoRow>
            <InfoRow label="수정한 날 짜:" cls="h-[30px]">
              <span className="tracking-[0.350px]">2010년 5월 27일 목</span><br />요일 오전 5:01
            </InfoRow>
            <InfoRow label="별점:">
              <span className="flex">
                {[0, 1, 2, 3, 4].map((i) => (
                  <svg key={i} width="13" height="13" viewBox="0 0 13 13">
                    <path d="M6.500 1l1.500 3.400 4.500.6-2.300 2.500.5 4.500H2.300l.5-4.500L.5 5l4.500-.6z" fill="#dcdcdc" stroke="#b0b0b0" strokeWidth=".8" />
                  </svg>
                ))}
              </span>
            </InfoRow>
            <InfoRow label="태그:"><span className="text-[#0057ae]">태그 추가하기...</span></InfoRow>
            <InfoRow label="설명:"><span className="text-[#0057ae]">설명 추가...</span></InfoRow>
          </div>
        </div>
        <div className="-mt-[72px] flex w-[4px] items-center pl-[1px]"><Dots /></div>
      </div>
    </div>
  );
}

/* ---------- settings dialog ---------- */

const pages: { name: string; icon: React.ReactNode }[] = [
  { name: "시작", icon: <House /> },
  { name: "보기 모드", icon: <ViewModes /> },
  { name: "탐색", icon: <Mouse /> },
  { name: "서비스", icon: <Flag /> },
  { name: "휴지통", icon: <TrashBig /> },
  { name: "일반", icon: <Gear /> },
];

function PushButton({ icon, label, k, w, dim = false }: { icon: React.ReactNode; label: string; k: string; w: string; dim?: boolean }) {
  return (
    <div
      className={`flex h-[20px] items-center justify-center gap-[6px] rounded-[4px] bg-gradient-to-b pr-[2px] shadow-[0_0_0_1px_rgba(150,150,150,.35),0_1px_2px_rgba(0,0,0,.4)] ${w} ${
        dim ? "from-[#e4e3e3] to-[#d9d8d7] text-[#9a9a9a]" : "from-[#f6f6f5] to-[#e5e4e3]"
      }`}
    >
      {icon}
      <span className="pt-px leading-[13px] tracking-[-0.050px]">{label}<Key k={k} /></span>
    </div>
  );
}

function SettingsDialog() {
  return (
    <div className="absolute left-[196px] top-[256px] flex h-[497px] w-[520px] flex-col rounded-[4px] bg-[radial-gradient(ellipse_220px_60px_at_50%_0,#ffffff,transparent),linear-gradient(#ececec,#d2d1d0_60%,#d2d1cf)] shadow-[0_0_3px_1px_#7ed0ff,0_0_14px_4px_rgba(110,195,250,.7)]">
      <div className="flex h-[22px] items-center pl-[6px] pr-[7px]">
        <Cabinet />
        <span className="ml-[8px]"><RoundButton><Glyph d="M4 4.500h1" /></RoundButton></span>
        <span className="flex-1 pt-[2px] text-center tracking-[-0.300px]">Dolphin 설정 - Dolphin</span>
        <span className="flex gap-[8px]">
          <RoundButton><Glyph d={HELP} /></RoundButton>
          <RoundButton><Glyph d={DOWN} /></RoundButton>
          <RoundButton><Glyph d={UP} /></RoundButton>
          <RoundButton><Glyph d={CROSS} /></RoundButton>
        </span>
      </div>
      <div className="flex h-[429px] pl-[16px] pt-[13px]">
        <div className="h-[416px] w-[92px] rounded-[3px] border-2 border-[#3c7cca] bg-white">
          {pages.map((p, i) => (
            <div
              key={p.name}
              className={`flex h-[57px] flex-col items-center pt-[5px] font-bold ${
                i === 2 ? "rounded-[2px] bg-gradient-to-b from-[#62aef8] to-[#4189d6] text-white shadow-[inset_0_0_0_1px_#3a7cc4,inset_0_0_0_2px_rgba(140,195,250,.6)]" : ""
              }`}
            >
              <span className="flex h-[32px]">{p.icon}</span>
              <span className="mt-[3px] font-black leading-[16px] tracking-[0.300px]">{p.name}</span>
            </div>
          ))}
        </div>
        <div className="ml-[11px] w-[380px]">
          <div className="flex h-[38px] items-center justify-between pl-[3px] pr-[1px]">
            <b className="-mt-[4px] font-black tracking-[0.300px]">탐색</b>
            <Mouse w={25} h={22} />
          </div>
          <div className="mt-[13px] h-[80px] rounded-t-[5px] bg-[linear-gradient(rgba(255,255,255,.35),transparent)] shadow-[0_-1px_0_#bfbebd]">
            <div className="h-[80px] rounded-t-[5px] bg-[linear-gradient(90deg,#c4c3c2_0,#f2f2f2_1px,transparent_2px,transparent_378px,#f2f2f2_379px,#bdbcbb_380px)] pt-[5px] [mask-image:linear-gradient(#000,#000_50%,transparent)] [mask-size:100%_160px]">
              <div className="text-center leading-[16px]">마우스</div>
              {["한 번 클릭으로 파일과 폴더 열기", "두 번 클릭으로 파일과 폴더 열기"].map((t, i) => (
                <div key={t} className={`flex h-[25px] items-center pl-[10px] ${i === 0 ? "mt-[5px]" : ""}`}>
                  <span className="flex h-[15px] w-[15px] items-center justify-center rounded-full bg-gradient-to-b from-[#fbfbfa] to-[#e9e8e7] shadow-[0_0_0_1px_rgba(150,150,150,.35),0_1px_2px_rgba(0,0,0,.3)]">
                    {i === 1 && <i className="h-[5px] w-[5px] rounded-full bg-[#3a3a3a]" />}
                  </span>
                  <span className="ml-[7px] pt-[2px] tracking-[-0.050px]">{t}</span>
                </div>
              ))}
            </div>
          </div>
          <div className="mt-[5px]">
            {["압축 파일을 폴더로 열기", "드래그하는 동안 폴더 열기"].map((t) => (
              <div key={t} className="flex h-[27px] items-center pl-[1px]">
                <span className="h-[17px] w-[17px] rounded-[4px] bg-gradient-to-b from-[#fbfbfa] to-[#eae9e8] shadow-[0_0_0_1px_rgba(150,150,150,.35),0_1px_2px_rgba(0,0,0,.3)]" />
                <span className="ml-[7px] pt-[2px] tracking-[-0.050px]">{t}</span>
              </div>
            ))}
          </div>
        </div>
      </div>
      <div className="flex pl-[18px] pr-[18px] pt-[8px]">
        <PushButton icon={<Undo />} label="기본값" k="D" w="w-[98px]" />
        <div className="ml-auto flex gap-[10px]">
          <PushButton icon={<Check />} label="확인" k="O" w="w-[87px]" />
          <PushButton icon={<Check gray />} label="적용" k="A" w="w-[87px]" dim />
          <PushButton icon={<Cancel />} label="취소" k="C" w="w-[86px]" />
        </div>
      </div>
      <svg width="6" height="6" viewBox="0 0 6 6" className="absolute bottom-[2px] right-[1px]">
        <path d="M0 5h1M2 5h1M3 3h1M5 5h1M5 3h1M5 1h1" stroke="#999" />
      </svg>
      <div className="absolute right-0 top-[244px]"><Dots /></div>
    </div>
  );
}

/* ---------- panel ---------- */

function Tray() {
  return (
    <div className="flex h-[27px] w-[275px] items-center rounded-[3px] border border-[#dbe3e6] bg-white/30 pl-[17px] shadow-[0_1px_2px_rgba(0,0,0,.35)]">
      <svg width="17" height="22" viewBox="0 0 17 22">
        <path d="M3 7q0-6 5.500-6T14 7z" fill="#e6dfe6" stroke="#999" />
        <rect x=".7" y="6.500" width="15.600" height="10" rx="1" fill="#58a8f0" stroke="#222" strokeWidth="1.300" />
        <path d="M3 11.500h10M6 11.500l2-2.500M8 11.500l2 2.500" stroke="#fff" fill="none" />
        <path d="M5 20h7M8.500 17v3" stroke="#e9e9e9" strokeWidth="2" />
      </svg>
      <svg width="21" height="20" viewBox="0 0 21 20" className="ml-[8px]">
        <path d="M.5 7.500h4L12.500.8v18.400L4.500 12.500h-4z" fill="#dcdcdc" stroke="#777" />
        <path d="M9 4v12" stroke="#777" />
        <path d="M15 8l5 5M20 8l-5 5" stroke="#e01616" strokeWidth="2" />
      </svg>
      <svg width="21" height="21" viewBox="0 0 21 21" className="ml-[7px]">
        <path d="M1 2h15v17H1z" fill="#e8c929" stroke="#b8950a" />
        <path d="M3 5h11v12H3z" fill="#fff" />
        <path d="M5 0h6v4H5z" fill="#9e9e9e" stroke="#666" />
        <path d="M7 6.500h12.500V16l-4 4H7z" fill="#fcfcf5" stroke="#b5b5a5" />
        <path d="M15.500 20v-4h4z" fill="#ddd" />
      </svg>
      <svg width="19" height="20" viewBox="0 0 19 20" className="ml-[7px]">
        <path d="M1 19l6-7" stroke="#8a8a8a" strokeWidth="2" />
        <path d="M6 8l6-5 5 5-5 6q-4 1-6-6z" fill="#26a248" stroke="#3f9b5a" />
        <path d="M13 3l2-3M16 6l3-2" stroke="#777" strokeWidth="1.300" />
      </svg>
      <svg width="16" height="12" viewBox="0 0 16 12" className="ml-[11px] mt-[4px]">
        <rect x=".5" y=".5" width="15" height="11" fill="#f4f7fb" stroke="#a9b3c2" />
        <path d="M1 1l7 6 7-6M1 11l5-5M15 11l-5-5" fill="none" stroke="#9db0cc" />
      </svg>
      <svg width="15" height="20" viewBox="0 0 15 20" className="ml-[12px]">
        <rect x=".5" y=".5" width="14" height="19" rx="6" fill="#5d6163" stroke="#4c4c4c" />
        <path d="M4 6.500l7 6.500-3.500 3V4L11 7l-7 6" fill="none" stroke="#fff" strokeWidth="1.300" />
      </svg>
      <svg width="21" height="20" viewBox="0 0 21 20" className="ml-[11px]">
        <path d="M5 1h11v7H5z" fill="#f4f4f4" stroke="#aaa" />
        <path d="M1 8h19v7H1z" fill="#6b6b6b" stroke="#444" />
        <path d="M4 10.500h13" stroke="#111" strokeWidth="2" />
        <path d="M4 13h13l1 6H3z" fill="#fff" stroke="#bbb" />
      </svg>
      <span className="ml-[6px] h-[25px] w-px bg-[#8d999e]" />
      <svg width="18" height="22" viewBox="0 0 18 22" className="ml-[8px]">
        <rect x="10" y="0" width="4" height="2" fill="#555" />
        <rect x="7.500" y="2" width="9" height="19" rx="1" fill="#d9f0d3" stroke="#4f8a43" />
        <path d="M8.500 5h7M8.500 10h7M8.500 15h7M8.500 19h7" stroke="#49b53a" strokeWidth="2.600" />
        <path d="M9 1L0 12h4l-3 9L10 9H6z" fill="#ffb71b" stroke="#d88900" strokeWidth=".7" />
      </svg>
      <svg width="20" height="20" viewBox="0 0 20 20" className="ml-[15px]">
        <circle cx="10" cy="10" r="9.400" fill="#989c9d" stroke="#7f8485" />
        <path d="M8 8.500h3V15M7.500 15h6" fill="none" stroke="#eee" strokeWidth="1.800" />
        <circle cx="10.300" cy="5" r="1.400" fill="#eee" />
      </svg>
    </div>
  );
}

function Panel() {
  return (
    <div className="absolute bottom-0 left-0 flex h-[35px] w-[1280px] items-center border-t border-[#5f7076] bg-[linear-gradient(90deg,transparent_58.200%,rgba(255,255,255,.35)_58.300%,rgba(255,255,255,.35)_59.300%,transparent_59.500%,transparent_62.500%,rgba(255,255,255,.3)_62.700%,rgba(255,255,255,.3)_64.200%,transparent_64.300%),linear-gradient(#dfe8eb,#c3d0d5_20%,#a3b2b8_75%,#8fa0a7)] pt-[2px] shadow-[inset_0_1px_0_#eaf1f3]">
      <svg width="29" height="30" viewBox="0 0 29 30" className="ml-[1px]">
        <rect x=".7" y=".7" width="27.600" height="28.600" rx="4" fill="url(#kblue)" stroke="#0c3f86" strokeWidth="1.400" />
        <circle cx="13" cy="17" r="7.500" fill="none" stroke="#fff" strokeWidth="2.500" strokeDasharray="2.900 2.990" />
        <circle cx="13" cy="17" r="5.500" fill="none" stroke="#fff" strokeWidth="2.200" />
        <path d="M13 4v15M23 4l-8 8 8 9" fill="none" stroke="#2c68b5" strokeWidth="5" />
        <path d="M13.500 6v13M20.500 6l-6 6.500 7 7.500" fill="none" stroke="#fff" strokeWidth="3" />
      </svg>
      <div className="relative ml-[6px] flex">
        <Folder w={31} h={26} />
        <svg width="22" height="21" viewBox="0 0 22 21" className="absolute left-[5px] top-[7px]">
          <path d="M11 1l3 6.500 7 .8-5.200 4.700 1.500 7-6.300-3.500L4.700 20l1.500-7L1 8.300l7-.8z" fill="url(#gold)" stroke="#fff5cf" strokeWidth="1.300" />
        </svg>
      </div>
      <div className="ml-[6px] flex w-[16px] flex-col gap-[3px]">
        <div className="flex h-[13px] items-center justify-center border border-[#8b9599] bg-[#d8dedf]"><i className="h-[8px] w-[10px] border-t-2 border-[#444] bg-[#777]" /></div>
        <div className="h-[13px] border border-[#9aa5a9] bg-[#bcc8cc]" />
      </div>
      <svg width="27" height="21" viewBox="0 0 27 21" className="ml-[9px]">
        <rect x=".5" y=".5" width="26" height="20" fill="#235088" stroke="#162d4c" />
        <path d="M1 12q14-10 25-6v14H1z" fill="#3b6fae" opacity=".6" />
        <path d="M1 17q12-4 25-1v4H1z" fill="#11294a" opacity=".7" />
        <path d="M3 3h1M3 6h1M3 9h1" stroke="#cde" />
      </svg>
      <div className="z-10 ml-[10px] flex h-[27px] w-[312px] items-center rounded-[3px] border border-[#f0f3f4] bg-[#e3e7e9]/85 pl-[4px] shadow-[0_1px_2px_rgba(0,0,0,.5)]">
        <Cabinet />
        <span className="ml-[3px] pt-[3px] text-[#111]">yan - Dolphin</span>
      </div>
      <div className="-ml-[52px] flex h-[27px] w-[312px] items-center rounded-[3px] border border-[#dbe3e6] bg-gradient-to-b from-white/50 to-white/15 pl-[6px] shadow-[0_1px_2px_rgba(0,0,0,.4)]">
        <svg width="16" height="16" viewBox="0 0 16 16">
          <circle cx="8" cy="8" r="7.500" fill="#f0c419" />
          <path d="M1.500 4.500A7.500 7.500 0 0 1 14.500 4.500L8 5z" fill="#e03a2c" />
          <path d="M1.500 4.500A7.500 7.500 0 0 0 8 15.500L6 9z" fill="#37a04a" />
          <circle cx="8" cy="8" r="3.300" fill="#4a87e0" stroke="#fff" />
        </svg>
        <span className="ml-[1px] pt-[3px] text-[#111]">녹풍 &gt; 글목록 - Google 크롬</span>
      </div>
      <svg width="16" height="16" viewBox="0 0 16 16" className="ml-[191px]">
        <circle cx="8" cy="8" r="7" fill="#aab6ba" stroke="#8a979b" strokeWidth="1.200" />
        <path d="M5.500 3l7 5-7 5z" fill="#eef2f3" stroke="#8b979b" strokeWidth=".6" />
      </svg>
      <span className="-ml-[3px]"><Tray /></span>
      <div className="ml-[9px] w-[62px] pt-[3px] text-[#111]">
        <div className="pl-[2px] text-[12px] leading-[14px] tracking-[0.100px]">오전 9:59</div>
        <div className="pl-[5px] text-[10px] leading-[14px]">8월 9일 (월)</div>
      </div>
      <svg width="20" height="34" viewBox="0 0 20 34" className="ml-auto">
        <circle cx="19" cy="17" r="17" fill="#a3b0b5" stroke="#d5dee1" strokeWidth="1.500" />
        <path d="M20 10q-9-2-11 4 0 6 8 5M18 16v7" fill="none" stroke="#d3dadc" strokeWidth="3" />
      </svg>
    </div>
  );
}

export default function App() {
  return (
    <div className="relative h-[1024px] w-[1280px] overflow-hidden bg-black font-['Noto_Sans','Noto_Sans_CJK_KR',sans-serif] text-[12px] leading-[18px] text-[#1c1c1c]">
      <Gradients />
      <Browser />
      <Dolphin />
      <SettingsDialog />
      <Panel />
    </div>
  );
}
